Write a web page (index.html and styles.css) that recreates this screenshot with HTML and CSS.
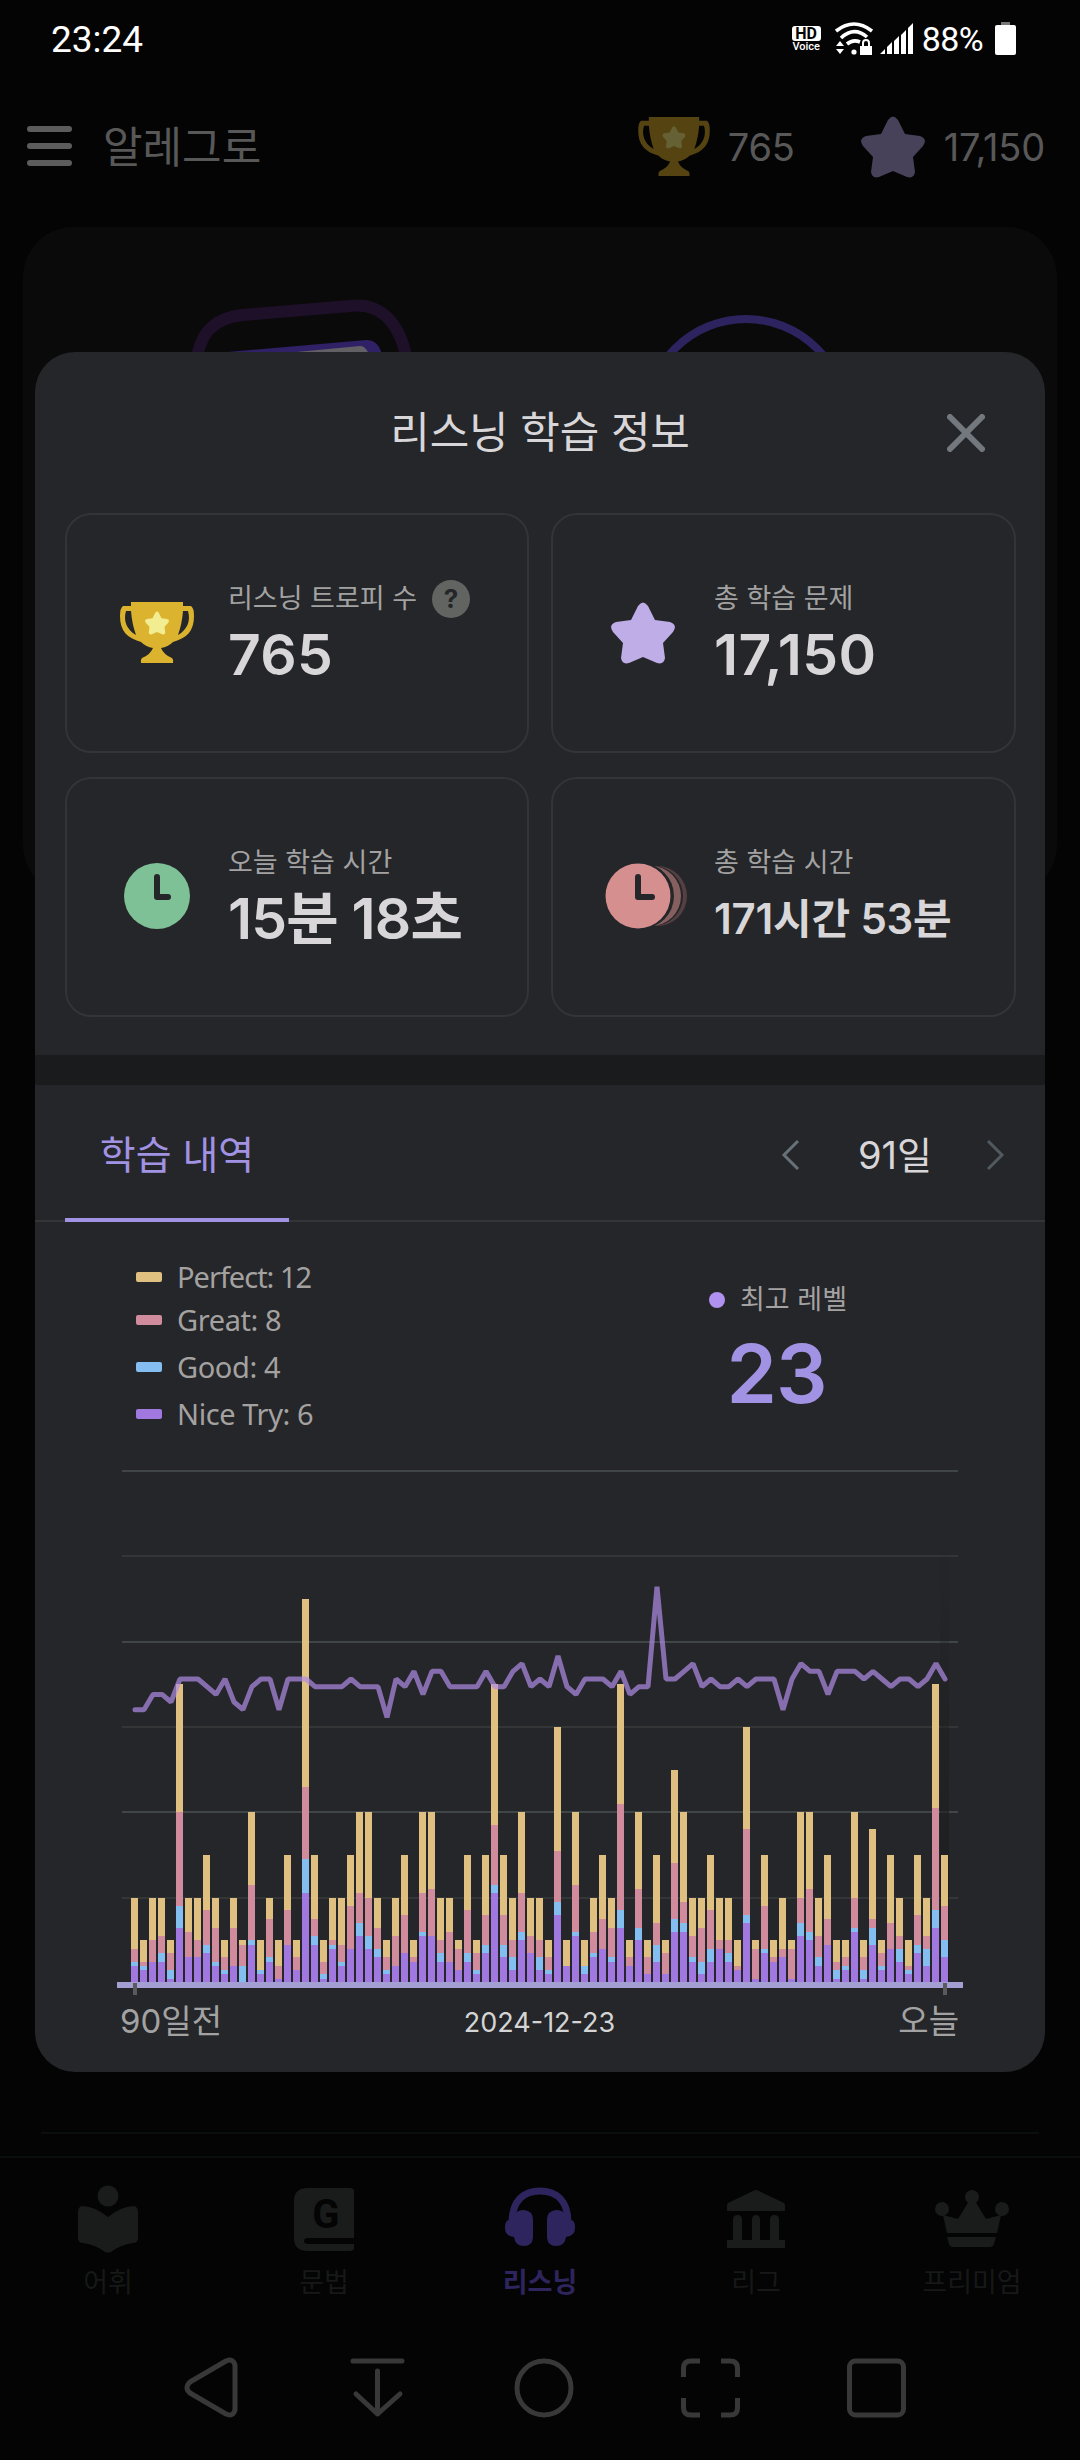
FILE: index.html
```html
<!DOCTYPE html>
<html lang="ko">
<head>
<meta charset="utf-8">
<title>리스닝 학습 정보</title>
<link rel="stylesheet" href="styles.css">
</head>
<body>
<svg class="defs" width="0" height="0">
  <symbol id="star" viewBox="0 0 64 62">
    <path d="M27 4Q32-3 37 4L44 18L59 20Q67 23 62 30L52 41L54 56Q53 63 46 61L32 55L18 61Q11 63 10 56L12 41L2 30Q-3 23 5 20L20 18Z" fill="currentColor"/>
  </symbol>
  <symbol id="trophy" viewBox="0 0 76 62">
    <path d="M12 0H64V4H72Q75 6 75 14C75 29 68 36 54 40Q49 45 42 46Q45 53 53 56Q55 58 54 61H22Q21 58 23 56Q31 53 34 46Q27 45 22 40C8 36 1 29 1 14Q1 6 4 4H12ZM12 9H7C4 19 8 28 17 33Q13 22 12 9ZM64 9Q63 22 59 33C68 28 72 19 69 9Z" fill="currentColor" fill-rule="evenodd"/>
    <use class="trophy-star" href="#star" x="26" y="9" width="24" height="24"/>
  </symbol>
</svg>

<div class="status-bar">
  <span class="clock">23:24</span>
  <div class="status-icons">
    <div class="hd"><b>HD</b><span>Voice</span></div>
    <svg class="wifi" width="38" height="34" viewBox="0 0 38 34">
      <g fill="none" stroke="#fff" stroke-width="3.6">
        <path d="M1 9Q19-5 37 9"/>
        <path d="M6 16Q19 4 32 15"/>
        <path d="M12 22Q18 17 25 20"/>
      </g>
      <path d="M1 24L5 19L9 24ZM1 27L5 32L9 27Z" fill="#fff"/>
      <circle cx="19" cy="30" r="2.6" fill="#fff"/>
      <path d="M25 24H37V33H25Z" fill="#fff"/>
      <path d="M28 24V21Q28 18 31 18Q34 18 34 21V24" fill="none" stroke="#fff" stroke-width="2"/>
    </svg>
    <svg class="signal" width="34" height="32" viewBox="0 0 34 32" fill="#fff">
      <path d="M0 31L5 26V31ZM7 24L12 19V31H7ZM14 18L19 13V31H14ZM21 12L26 7V31H21ZM28 5L33 0V31H28Z"/>
    </svg>
    <span class="percent">88%</span>
    <svg width="22" height="34" viewBox="0 0 22 34">
      <path d="M6 0H15V3H6Z" fill="#777"/>
      <rect x="0" y="3" width="21" height="30" rx="2" fill="#fff"/>
    </svg>
  </div>
</div>

<header class="app-header">
  <div class="menu"><i></i><i></i><i></i></div>
  <span class="app-user">알레그로</span>
  <svg class="head-trophy" width="74" height="60"><use href="#trophy"/></svg>
  <span class="head-count trophies">765</span>
  <svg class="head-star" width="64" height="62"><use href="#star"/></svg>
  <span class="head-count">17,150</span>
</header>

<section class="panel">
  <svg width="1034" height="140" viewBox="23 227 1034 140" fill="none">
    <path d="M196 367C198 335 212 318 243 315L350 306C386 302 403 330 408 367" stroke="#1f102a" stroke-width="12"/>
    <path d="M228 352L366 340Q382 339 384 367H228Z" fill="#302065"/>
    <path d="M286 353L360 346Q369 346 372 367H286Z" fill="#626064"/>
    <circle cx="746" cy="419" r="100" stroke="#2d245f" stroke-width="8"/>
  </svg>
</section>

<nav class="tabbar">
  <div class="tab-item">
    <svg width="80" height="74" viewBox="0 0 80 74" fill="currentColor"><circle cx="40" cy="15" r="10.5"/><path d="M40 36Q26 25 14 25Q10 26 10 31V57Q10 62 15 62Q28 64 37 71Q40 72 43 71Q52 64 65 62Q70 62 70 57V31Q70 26 66 25Q54 25 40 36Z"/></svg>
    <span>어휘</span>
  </div>
  <div class="tab-item">
    <svg width="80" height="74" viewBox="0 0 80 74"><path d="M24 7H66Q70 7 70 10V57H24Q20 57 20 60Q20 63 24 63H70V67Q70 70 66 70H24Q10 70 10 57V20Q10 7 24 7Z" fill="currentColor"/><text class="book-letter" x="42" y="47" text-anchor="middle">G</text></svg>
    <span>문법</span>
  </div>
  <div class="tab-item active">
    <svg width="80" height="74" viewBox="0 0 80 74" fill="currentColor"><path d="M12 42C12 18 25 10 40 10C55 10 68 18 68 42" fill="none" stroke="currentColor" stroke-width="7"/><path d="M14 34Q17 29 24 29Q33 30 33 38V57Q32 65 24 65Q15 65 14 56Q5 55 5 47Q5 39 9 39ZM66 34Q63 29 56 29Q47 30 47 38V57Q48 65 56 65Q65 65 66 56Q75 55 75 47Q75 39 71 39Z"/></svg>
    <span>리스닝</span>
  </div>
  <div class="tab-item">
    <svg width="80" height="74" viewBox="0 0 80 74" fill="currentColor"><path d="M11 30V24Q11 22 14 21L37 10Q40 8 43 10L66 21Q69 22 69 24V30ZM17 59V39Q17 34 21.500 34Q26 34 26 39V59H36V39Q36 34 40 34Q44 34 44 39V59H54V39Q54 34 58.500 34Q63 34 63 39V59H69V67H11V59Z"/></svg>
    <span>리그</span>
  </div>
  <div class="tab-item">
    <svg width="80" height="74" viewBox="0 0 80 74" fill="currentColor"><circle cx="40" cy="16" r="7"/><circle cx="10" cy="28" r="7"/><circle cx="70" cy="28" r="7"/><path d="M11 34L26 38L37 20H43L54 38L69 34L65 52H15ZM15 56H64L62 63Q61 66 58 66H21Q18 66 17 63Z"/></svg>
    <span>프리미엄</span>
  </div>
</nav>

<div class="system-nav">
  <svg width="62" height="62" viewBox="0 0 62 62"><path d="M44 4L8 25Q2 31 8 36L44 57Q51 60 53 53V8Q51 1 44 4Z"/></svg>
  <svg width="62" height="62" viewBox="0 0 62 62"><path d="M5 4H54M29.500 14V57M8 37L29.500 57L52 37"/></svg>
  <svg width="62" height="62" viewBox="0 0 62 62"><circle cx="30" cy="31" r="27"/></svg>
  <svg width="62" height="62" viewBox="0 0 62 62"><path class="butt" d="M3.500 20V11Q3.500 4 11 4H20M41 4H50Q57.500 4 57.500 11V20M57.500 41V51Q57.500 58 50 58H41M20 58H11Q3.500 58 3.500 51V41"/></svg>
  <svg width="62" height="62" viewBox="0 0 62 62"><rect x="3.500" y="4" width="54" height="54" rx="6"/></svg>
</div>

<div class="modal">
  <div class="modal-header">
    <h2>리스닝 학습 정보</h2>
    <svg class="close" width="38" height="38" viewBox="0 0 38 38"><path d="M3 3L35 35M35 3L3 35"/></svg>
  </div>

  <div class="cards">
    <div class="card">
      <svg class="card-icon gold" width="80" height="62" viewBox="0 0 80 62"><use href="#trophy" x="2" width="76" height="62"/></svg>
      <div class="card-text">
        <div class="card-label">리스닝 트로피 수 <i class="help">?</i></div>
        <div class="card-value">765</div>
      </div>
    </div>
    <div class="card">
      <svg class="card-icon violet" width="80" height="62" viewBox="0 0 80 62"><use href="#star" x="8" width="64" height="62"/></svg>
      <div class="card-text">
        <div class="card-label">총 학습 문제</div>
        <div class="card-value">17,150</div>
      </div>
    </div>
    <div class="card">
      <svg class="card-icon" width="80" height="68" viewBox="0 0 80 68"><circle cx="40" cy="33" r="33" fill="#7fc196"/><path class="hand" d="M40 14V34H51"/></svg>
      <div class="card-text">
        <div class="card-label">오늘 학습 시간</div>
        <div class="card-value time">15분 18초</div>
      </div>
    </div>
    <div class="card">
      <svg class="card-icon echo" width="88" height="68" viewBox="0 0 88 68">
        <circle cx="54" cy="33" r="30" fill="#553f42"/>
        <circle cx="50" cy="33" r="30" fill="#242629"/>
        <circle cx="48" cy="33" r="30" fill="#86605f"/>
        <circle cx="38" cy="33" r="33" fill="#242629"/>
        <circle cx="35" cy="33" r="32.500" fill="#d58f8f"/>
        <path class="hand" d="M35 14V34H49"/>
      </svg>
      <div class="card-text">
        <div class="card-label">총 학습 시간</div>
        <div class="card-value small">171시간 53분</div>
      </div>
    </div>
  </div>

  <div class="divider"></div>

  <div class="history-head">
    <div class="history-tab">학습 내역</div>
    <div class="period">
      <svg width="20" height="32" viewBox="0 0 20 32"><path d="M17 2L3 16L17 30"/></svg>
      <span>91일</span>
      <svg class="dim" width="20" height="32" viewBox="0 0 20 32"><path d="M3 2L17 16L3 30"/></svg>
    </div>
  </div>

  <div class="summary">
    <ul class="legend">
      <li class="perfect">Perfect: 12</li>
      <li class="great">Great: 8</li>
      <li class="good">Good: 4</li>
      <li class="nice">Nice Try: 6</li>
    </ul>
    <div class="level">
      <div class="level-label">최고 레벨</div>
      <div class="level-value">23</div>
    </div>
  </div>

  <svg id="chart" class="chart" width="846" height="540" viewBox="0 0 846 540"></svg>
  <div class="axis">
    <span>90일전</span>
    <span class="date">2024-12-23</span>
    <span>오늘</span>
  </div>
</div>

<script src="chart.js"></script>
</body>
</html>
```
FILE: styles.css
```css
* {
  box-sizing: border-box;
}
body {
  margin: 0;
  width: 1080px;
  height: 2460px;
  background: #040404;
  color: #d8d6d8;
  font-family: Inter, "Noto Sans CJK KR", sans-serif;
  position: relative;
  display: flex;
  flex-direction: column;
  overflow: hidden;
}
svg {
  display: block;
  flex: none;
}
.defs {
  position: absolute;
}

/* status bar */
.status-bar {
  height: 78px;
  padding: 0 63px 0 51px;
  display: flex;
  justify-content: space-between;
  align-items: center;
  font-family: Roboto, sans-serif;
  color: #fff;
}
.clock {
  font-size: 37px;
}
.status-icons {
  display: flex;
  align-items: center;
}
.hd {
  width: 29px;
  text-align: center;
  font-size: 11px;
  line-height: 11px;
  font-weight: 500;
}
.hd b {
  display: block;
  background: #fff;
  color: #040404;
  border-radius: 3px;
  font-size: 16px;
  line-height: 15px;
}
.wifi {
  margin-left: 14px;
}
.signal {
  margin-left: 7px;
}
.percent {
  font-size: 34px;
  letter-spacing: -0.6px;
  margin: 0 12px 0 8px;
}

/* header */
.app-header {
  height: 149px;
  padding: 0 35px 11px 27px;
  display: flex;
  align-items: center;
  color: #585858;
}
.menu {
  width: 45px;
  margin-bottom: 2px;
  display: grid;
  gap: 11px;
}
.menu i {
  height: 6px;
  border-radius: 3px;
  background: #5c5c5c;
}
.app-user {
  margin-left: 31px;
  margin-right: auto;
  font-size: 43px;
  line-height: 60px;
}
.head-count {
  font-size: 38px;
  letter-spacing: -0.2px;
}
.head-trophy {
  --star: #656135;
  color: #554311;
  margin-right: 17px;
}
.trophies {
  margin-right: 66px;
}
.head-star {
  color: #48415a;
  margin-right: 19px;
}
.trophy-star {
  color: var(--star);
}

.panel {
  height: 668px;
  margin: 0 23px;
  border-radius: 50px;
  background: #0b0a0b;
  overflow: hidden;
}

/* bottom tabs */
.tabbar {
  margin-top: auto;
  height: 167px;
  border-top: 2px solid #0b0e0e;
  display: grid;
  grid-template-columns: repeat(5, 1fr);
  padding-top: 23px;
  position: relative;
}
.tabbar::before {
  content: "";
  position: absolute;
  left: 41px;
  right: 41px;
  top: -26px;
  height: 2px;
  background: #0a0e0e;
}
.tab-item {
  display: flex;
  flex-direction: column;
  align-items: center;
  color: #1a1b1b;
  font-size: 28px;
  line-height: 40px;
}
.tab-item span {
  margin-top: 8px;
  color: #171818;
  font-size: 27px;
}
.active,
.active span {
  color: #2e245e;
  font-weight: 700;
}
.book-letter {
  font: 700 40px Roboto, sans-serif;
  fill: #040404;
}
.system-nav {
  height: 137px;
  padding: 34px 0 0 130px;
  display: grid;
  grid-template-columns: repeat(5, 166px);
  justify-items: center;
  align-items: start;
}
.system-nav svg {
  fill: none;
  stroke: #383838;
  stroke-width: 5;
  stroke-linecap: round;
  stroke-linejoin: round;
}
.system-nav .butt {
  stroke-linecap: butt;
}

/* modal */
.modal {
  position: absolute;
  left: 35px;
  top: 352px;
  width: 1010px;
  height: 1720px;
  border-radius: 40px;
  background: #242629;
  overflow: hidden;
}
.modal-header {
  height: 161px;
  padding-right: 60px;
  display: grid;
  grid-template-columns: 1fr auto 1fr;
  align-items: center;
}
.modal-header h2 {
  grid-column: 2;
  margin: 0 -60px 0 0;
  padding-bottom: 1px;
  font-size: 43px;
  font-weight: 400;
  line-height: 60px;
  letter-spacing: -0.2px;
}
.close {
  justify-self: end;
  fill: none;
  stroke: #73787e;
  stroke-width: 6;
  stroke-linecap: round;
}
.cards {
  height: 542px;
  padding: 0 29px 0 30px;
  display: grid;
  grid-template-columns: 464px 465px;
  grid-auto-rows: 240px;
  gap: 24px 22px;
}
.card {
  border: 2px solid #323436;
  border-radius: 26px;
  padding-left: 50px;
  display: flex;
  align-items: center;
}
.card-icon {
  overflow: visible;
  margin-right: 31px;
}
.echo {
  margin-right: 23px;
}
.gold {
  color: #dbb32e;
  --star: #f3ed91;
}
.violet {
  color: #bfade8;
}
.hand {
  fill: none;
  stroke: #242629;
  stroke-width: 6;
  stroke-linecap: round;
  stroke-linejoin: round;
}
.card-text {
  padding-top: 3px;
}
.card-label {
  height: 40px;
  display: flex;
  align-items: center;
  font-size: 27px;
  line-height: 40px;
  color: #a3a2a2;
}
.help {
  width: 38px;
  height: 38px;
  margin-left: 15px;
  border-radius: 50%;
  background: #626462;
  color: #242629;
  font: 700 26px/38px Inter, sans-serif;
  text-align: center;
}
.card-value {
  font-size: 57px;
  font-weight: 600;
  line-height: 72px;
  letter-spacing: 0.3px;
  white-space: nowrap;
}
.card-value.time {
  letter-spacing: -0.8px;
}
.card-value.small {
  font-size: 42px;
  letter-spacing: -0.2px;
}
.divider {
  height: 30px;
  background: #1a1b1d;
}

/* history */
.history-head {
  height: 137px;
  border-bottom: 2px solid #333537;
  padding: 0 40px 0 30px;
  display: flex;
  justify-content: space-between;
}
.history-tab {
  width: 224px;
  height: 137px;
  padding-top: 6px;
  border-bottom: 4px solid #a292e3;
  color: #a292e3;
  font-size: 39px;
  line-height: 128px;
  text-align: center;
}
.period {
  display: flex;
  align-items: center;
  padding-top: 4px;
  font-size: 38px;
  line-height: 134px;
}
.period span {
  width: 184px;
  padding-left: 4px;
  text-align: center;
}
.period svg {
  fill: none;
  stroke: #667278;
  stroke-width: 3;
}
.period .dim {
  stroke: #50595f;
}
.summary {
  height: 238px;
  padding: 35px 0 0 101px;
  display: flex;
}
.legend {
  list-style: none;
  width: 542px;
  margin: 0;
  padding: 0;
  font-family: "Noto Sans", sans-serif;
  font-size: 29px;
  letter-spacing: -0.4px;
  color: #a4a2a1;
}
.legend li {
  display: flex;
  align-items: center;
  gap: 15px;
  height: 40px;
  line-height: 38px;
  margin-bottom: 7px;
}
.legend .perfect {
  margin-bottom: 3px;
  letter-spacing: -1px;
}
.legend li::before {
  content: "";
  width: 26px;
  height: 10px;
  border-radius: 2px;
  background: currentColor;
}
.legend .perfect::before {
  background: #dfc080;
}
.legend .great::before {
  background: #d08c9c;
}
.legend .good::before {
  background: #84bdf0;
}
.legend .nice::before {
  background: #a078e0;
}
.level {
  width: 200px;
  display: flex;
  flex-direction: column;
  align-items: center;
  padding-top: 23px;
}
.level-label {
  display: flex;
  align-items: center;
  gap: 15px;
  font-size: 27px;
  line-height: 40px;
  color: #a4a2a3;
}
.level-label::before {
  content: "";
  width: 16px;
  height: 16px;
  border-radius: 50%;
  background: #b091ef;
}
.level-value {
  font-size: 81px;
  font-weight: 600;
  line-height: 108px;
  letter-spacing: -1px;
  margin-left: -3px;
  color: #a292e3;
}

/* chart */
.chart {
  margin-left: 82px;
}
.chart .major {
  fill: #404548;
}
.chart .minor {
  fill: #333537;
}
.chart .perfect {
  fill: #dfc080;
}
.chart .great {
  fill: #d08c9c;
}
.chart .good {
  fill: #84bdf0;
}
.chart .nice {
  fill: #a078e0;
}
.chart .base {
  fill: #a39fd2;
}
.chart .tick {
  fill: #5a5a5c;
}
.chart .line {
  fill: none;
  stroke: #b08ce6;
  stroke-opacity: 0.7;
  stroke-width: 5;
  stroke-linejoin: bevel;
  stroke-linecap: round;
}
.axis {
  margin-top: -3px;
  padding: 0 86px 0 85px;
  display: grid;
  grid-template-columns: 1fr auto 1fr;
  align-items: center;
  font-size: 33px;
  line-height: 44px;
  color: #a3a2a2;
}
.axis span:last-child {
  text-align: right;
}
.axis .date {
  padding-top: 4px;
  font-size: 27px;
  color: #d4d4d4;
}
```
FILE: chart.js
```js
// running totals per day: nice try, good, great, perfect
const days = [
  [4,5,8,20],[3,4,5,10],[5,5,10,20],[5,7,11,20],[1,3,7,10],[13,18,40,70],[6,6,12,20],
  [6,6,10,20],[7,9,17,30],[4,5,13,20],[2,3,6,10],[4,4,13,20],[0,4,9,10],[9,10,23,40],
  [2,3,3,10],[5,6,15,20],[1,1,4,10],[9,9,17,30],[3,3,6,10],[21,29,46,90],[9,11,15,30],
  [1,2,5,10],[8,9,10,20],[4,5,9,20],[8,8,18,30],[11,14,21,40],[8,11,20,40],[6,8,13,20],
  [2,3,6,10],[4,4,11,20],[7,7,16,30],[5,5,6,10],[11,12,21,40],[11,11,22,40],[5,7,10,20],
  [5,5,12,20],[3,3,8,10],[5,7,17,30],[2,3,7,10],[7,9,16,30],[21,23,37,70],[6,9,16,30],
  [3,6,10,20],[10,12,21,40],[7,7,11,20],[3,6,10,20],[2,3,6,10],[16,19,31,60],[4,4,4,10],
  [11,12,23,40],[2,4,4,10],[6,7,12,20],[8,8,15,30],[5,6,13,20],[13,17,42,70],[4,4,6,10],
  [10,13,22,40],[2,2,6,10],[5,9,14,30],[2,2,7,10],[12,15,28,50],[12,14,19,40],[5,6,11,20],
  [2,5,13,20],[5,8,17,30],[8,8,10,20],[5,7,10,20],[3,3,4,10],[14,16,36,60],[1,1,8,10],
  [7,8,18,30],[5,5,6,10],[6,6,8,20],[1,1,8,10],[11,14,20,40],[10,12,22,40],[4,6,11,20],
  [9,9,15,30],[1,3,5,10],[3,4,6,10],[12,13,20,40],[1,3,6,10],[9,13,15,36],[3,4,7,10],
  [8,8,14,30],[5,8,11,20],[2,3,4,10],[7,9,16,30],[4,8,11,20],[13,17,41,70],[6,10,18,30]
];

// level of each day, relative to today
const levels = [
  -4,-4,-2,-2,-3,0,0,0,-1,-2,0,-3,-4,-1,0,0,-4,0,0,0,-1,-1,-1,-1,0,-1,-1,-1,-5,0,
  -1,1,-2,1,1,-1,-1,-1,-1,1,-1,-1,1,2,-1,0,-1,3,-1,-2,0,0,0,-1,1,-2,-1,-1,12,0,
  0,1,2,-1,0,-1,-1,0,-1,0,0,0,-4,0,2,1,1,-2,1,1,1,0,1,0,-1,0,0,-1,0,2,0
];

const BASE = 523;
const UNIT = 4.268;
const names = ['nice', 'good', 'great', 'perfect'];

function rect(cls, x, y, w, h) {
  return `<rect class="${cls}" x="${x}" y="${y}" width="${w}" height="${h}"/>`;
}

let out = `<defs><linearGradient id="shade" x2="0" y2="1">
  <stop offset="0" stop-color="#1c1d1e" stop-opacity="0"/><stop offset="1" stop-color="#1c1d1e"/>
</linearGradient></defs>`;

for (let i = 1; i <= 6; i++) {
  out += rect(i % 2 ? 'minor' : 'major', 5, Math.round(BASE - i * 20 * UNIT) - 1, 836, 2);
}
out += `<rect x="823" y="71" width="9" height="${BASE - 71}" fill="url(#shade)"/>`;

days.forEach((day, i) => {
  let bottom = BASE;
  day.forEach((total, n) => {
    const top = Math.round(BASE - total * UNIT);
    if (bottom > top) out += rect(names[n], 14 + i * 9, top, 7, bottom - top);
    bottom = top;
  });
});

out += rect('base', 0, BASE - 1, 846, 6);
out += rect('tick', 16, BASE, 4, 12) + rect('tick', 826, BASE, 4, 12);

const points = levels.map((lv, i) => `${18 + i * 9},${(219 - lv * 7.68).toFixed(1)}`);
out += `<polyline class="line" points="${points.join(' ')}"/>`;

document.getElementById('chart').innerHTML = out;
```
